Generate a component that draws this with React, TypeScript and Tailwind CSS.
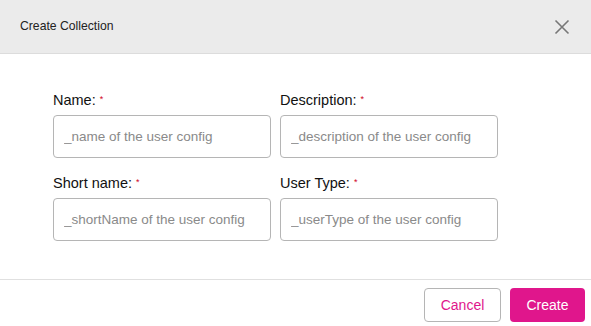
import React from 'react';

const fields = [
  { label: 'Name:', placeholder: '_name of the user config' },
  { label: 'Description:', placeholder: '_description of the user config' },
  { label: 'Short name:', placeholder: '_shortName of the user config' },
  { label: 'User Type:', placeholder: '_userType of the user config' },
];

export default function App() {
  return (
    <div className="w-[591px] h-[326px] bg-white overflow-hidden font-['Liberation_Sans',Arial,sans-serif] flex flex-col">
      {/* Header */}
      <div className="h-[54px] shrink-0 bg-[#ebebeb] border-b border-[#dcdcdc] flex items-center justify-between pl-5 pr-[21px]">
        <span className="text-[12.2px] text-[#222]">Create Collection</span>
        <button className="w-[16px] h-[16px] flex items-center justify-center text-[#777]">
          <svg width="16" height="16" viewBox="0 0 16 16" fill="none" stroke="currentColor" strokeWidth="1.6">
            <path d="M1.5 1.5 L14.5 14.5 M14.5 1.5 L1.5 14.5" />
          </svg>
        </button>
      </div>

      {/* Body */}
      <div className="flex-1 pt-[38px] pl-[53px]">
        <div className="grid grid-cols-[218px_218px] gap-x-[9px] gap-y-[17px]">
          {fields.map((f) => (
            <div key={f.label} className="flex flex-col">
              <label className="block h-[17px] overflow-visible text-[14.5px] leading-[17px] text-[#111] mb-[6px] whitespace-nowrap">
                {f.label}{' '}
                <span className="text-[#d0021b] text-[9px] leading-none relative -top-[3px]">*</span>
              </label>
              <input
                placeholder={f.placeholder}
                className="h-[43px] w-full border border-[#b5b5b5] rounded-[4px] pl-[10px] pr-[8px] text-[13.5px] text-[#333] placeholder:text-[#8a8a8a] outline-none"
              />
            </div>
          ))}
        </div>
      </div>

      {/* Footer */}
      <div className="h-[47px] shrink-0 border-t border-[#e0e0e0] flex justify-end items-start pt-[8px] pr-[6px] gap-[9px]">
        <button className="w-[77px] h-[34px] border border-[#b5b5b5] rounded-[4px] bg-white text-[14px] text-[#e0168c]">
          Cancel
        </button>
        <button className="w-[75px] h-[34px] rounded-[4px] bg-[#e0168c] text-[14px] text-white">
          Create
        </button>
      </div>
    </div>
  );
}
